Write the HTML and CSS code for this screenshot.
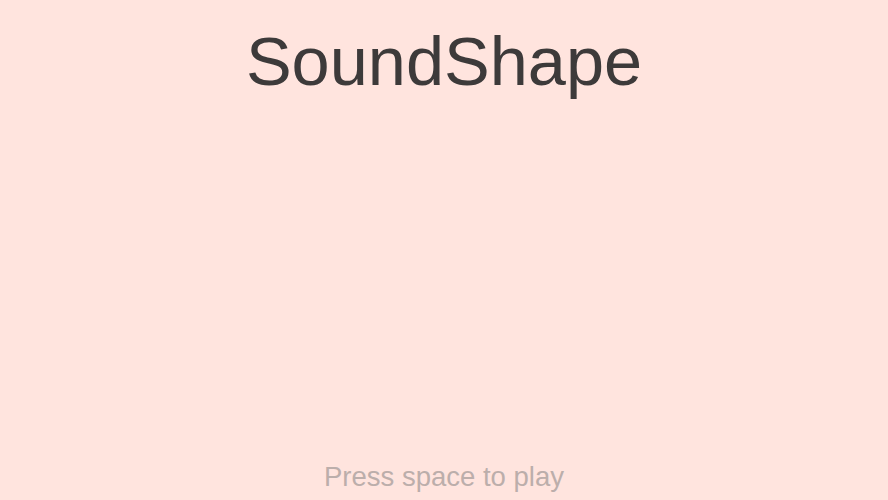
FILE: index.html
```html
<!DOCTYPE html>
<html>
<head>
<meta charset="utf-8">
<link rel="stylesheet" href="styles.css">
</head>
<body>
<main class="screen">
  <h1 class="title">SoundShape</h1>
  <div class="stage"></div>
  <p class="hint">Press space to play</p>
</main>
</body>
</html>
```
FILE: styles.css
```css
html, body {
  margin: 0;
  padding: 0;
  height: 100%;
  background: #ffe4de;
}
.screen {
  height: 500px;
  display: flex;
  flex-direction: column;
  align-items: center;
  font-family: "Liberation Sans", Arial, sans-serif;
}
.title {
  margin: 22px 0 0;
  font-size: 68.5px;
  font-weight: normal;
  line-height: 80px;
  color: #3d3a3a;
}
.stage {
  flex: 1;
}
.hint {
  margin: 0 0 6px;
  font-size: 27.5px;
  line-height: 34px;
  color: #bcaeab;
}
```
